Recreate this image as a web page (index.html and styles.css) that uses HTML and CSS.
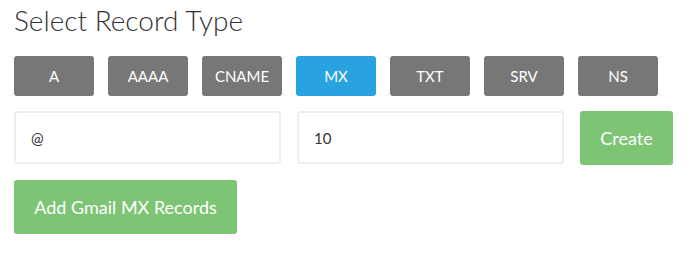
FILE: index.html
```html
<!DOCTYPE html>
<html lang="en">

<head>
  <meta charset="UTF-8">
  <title>Select Record Type</title>
  <link rel="stylesheet" href="styles.css">
</head>

<body>
  <h2 class="title">Select Record Type</h2>

  <div class="types">
    <button class="type">A</button>
    <button class="type">AAAA</button>
    <button class="type">CNAME</button>
    <button class="type active">MX</button>
    <button class="type">TXT</button>
    <button class="type">SRV</button>
    <button class="type">NS</button>
  </div>

  <div class="record">
    <input class="field" type="text" value="@">
    <input class="field" type="text" value="10">
    <button class="btn-green create">Create</button>
  </div>

  <button class="btn-green gmail">Add Gmail MX Records</button>
</body>

</html>
```

FILE: styles.css
```css
body {
  font-family: Lato, "Open Sans", sans-serif;
  margin: 0;
  padding: 0 14px;
  background: #fff;
  color: #333;
}

.title {
  font-weight: 300;
  font-size: 28px;
  margin: 5px 0 0;
  line-height: 30px;
  color: #333;
}

.types {
  display: flex;
  gap: 14px;
  margin-top: 21px;
}

.type {
  width: 80px;
  height: 40px;
  border: none;
  border-radius: 3px;
  background: #777;
  color: #fff;
  font-family: inherit;
  font-size: 15px;
}

.type.active {
  background: #29a2e1;
}

.record {
  display: flex;
  gap: 16px;
  margin-top: 15px;
}

.field {
  width: 267px;
  height: 53px;
  box-sizing: border-box;
  border: 2px solid #eee;
  border-radius: 3px;
  padding: 0 15px;
  font-family: inherit;
  font-size: 15px;
  color: #333;
}

.btn-green {
  border: none;
  border-radius: 3px;
  background: #7dc474;
  color: #fff;
  font-family: inherit;
  font-size: 18px;
}

.create {
  width: 93px;
  height: 54px;
}

.gmail {
  display: block;
  margin-top: 15px;
  width: 223px;
  height: 54px;
}
```
